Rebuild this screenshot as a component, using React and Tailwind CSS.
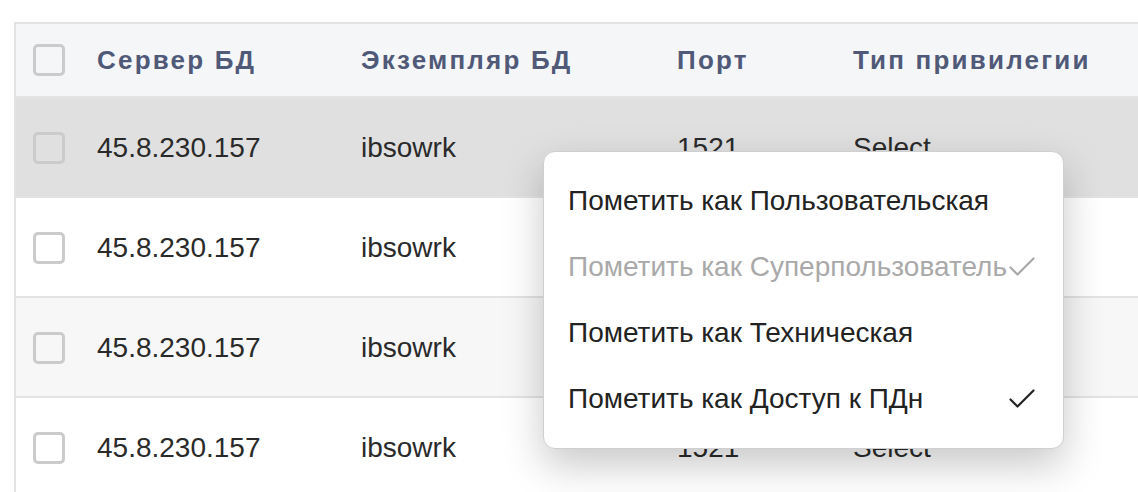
const rows = [
  { server: "45.8.230.157", instance: "ibsowrk", port: "1521", type: "Select", bg: "bg-[#e0e0e0]" },
  { server: "45.8.230.157", instance: "ibsowrk", port: "1521", type: "Select", bg: "bg-white" },
  { server: "45.8.230.157", instance: "ibsowrk", port: "1521", type: "Select", bg: "bg-[#f7f7f7]" },
  { server: "45.8.230.157", instance: "ibsowrk", port: "1521", type: "Select", bg: "bg-white" },
];

const menuItems = [
  { label: "Пометить как Пользовательская", disabled: false, checked: false },
  { label: "Пометить как Суперпользователь", disabled: true, checked: true },
  { label: "Пометить как Техническая", disabled: false, checked: false },
  { label: "Пометить как Доступ к ПДн", disabled: false, checked: true },
];

const Checkbox = () => (
  <div className="h-8 w-8 rounded-[5px] border-[3px] border-[#cbcbcb] bg-transparent" />
);

const Check = ({ color }) => (
  <svg viewBox="0 0 26 20" className="h-5 w-[26px] shrink-0" fill="none">
    <path d="M1.5 10.5 L8.5 17.5 L24.5 1.5" stroke={color} strokeWidth="2.2" strokeLinecap="round" strokeLinejoin="round" />
  </svg>
);

const cols = "grid grid-cols-[81px_264px_316px_176px_1fr] items-center";

export default function App() {
  return (
    <div className="relative h-[492px] w-full overflow-hidden bg-white pl-[14px] pt-[22px] font-['Liberation_Sans',Arial,sans-serif]">
      <div className="w-[1200px] border-l-2 border-t-2 border-[#e3e3e3]">
        <div className={`${cols} h-[74px] border-b-2 border-[#e3e3e3] bg-[#f5f6f8] text-[26px] font-bold tracking-[2.2px] text-[#505a78]`}>
          <div className="pl-[17px]">
            <Checkbox />
          </div>
          <div>Сервер БД</div>
          <div>Экземпляр БД</div>
          <div>Порт</div>
          <div>Тип привилегии</div>
        </div>

        {rows.map((row, i) => (
          <div
            key={i}
            className={`${cols} h-[100px] border-b-2 border-[#e3e3e3] pt-[2px] ${row.bg} text-[28px] text-[#2a2a2a]`}
          >
            <div className="pl-[17px]">
              <Checkbox />
            </div>
            <div>{row.server}</div>
            <div>{row.instance}</div>
            <div>{row.port}</div>
            <div>{row.type}</div>
          </div>
        ))}
      </div>

      <div className="absolute left-[543px] top-[151px] w-[521px] rounded-[12px] border border-[#cfcfcf] bg-white py-4 shadow-[0_16px_40px_rgba(0,0,0,0.22)]">
        {menuItems.map((item, i) => (
          <div
            key={i}
            className={`flex h-[66px] items-center justify-between pl-6 pr-7 text-[28px] whitespace-nowrap ${
              item.disabled ? "text-[#a9a9a9]" : "text-[#222222]"
            }`}
          >
            <span>{item.label}</span>
            {item.checked && <Check color={item.disabled ? "#a9a9a9" : "#222222"} />}
          </div>
        ))}
      </div>
    </div>
  );
}
